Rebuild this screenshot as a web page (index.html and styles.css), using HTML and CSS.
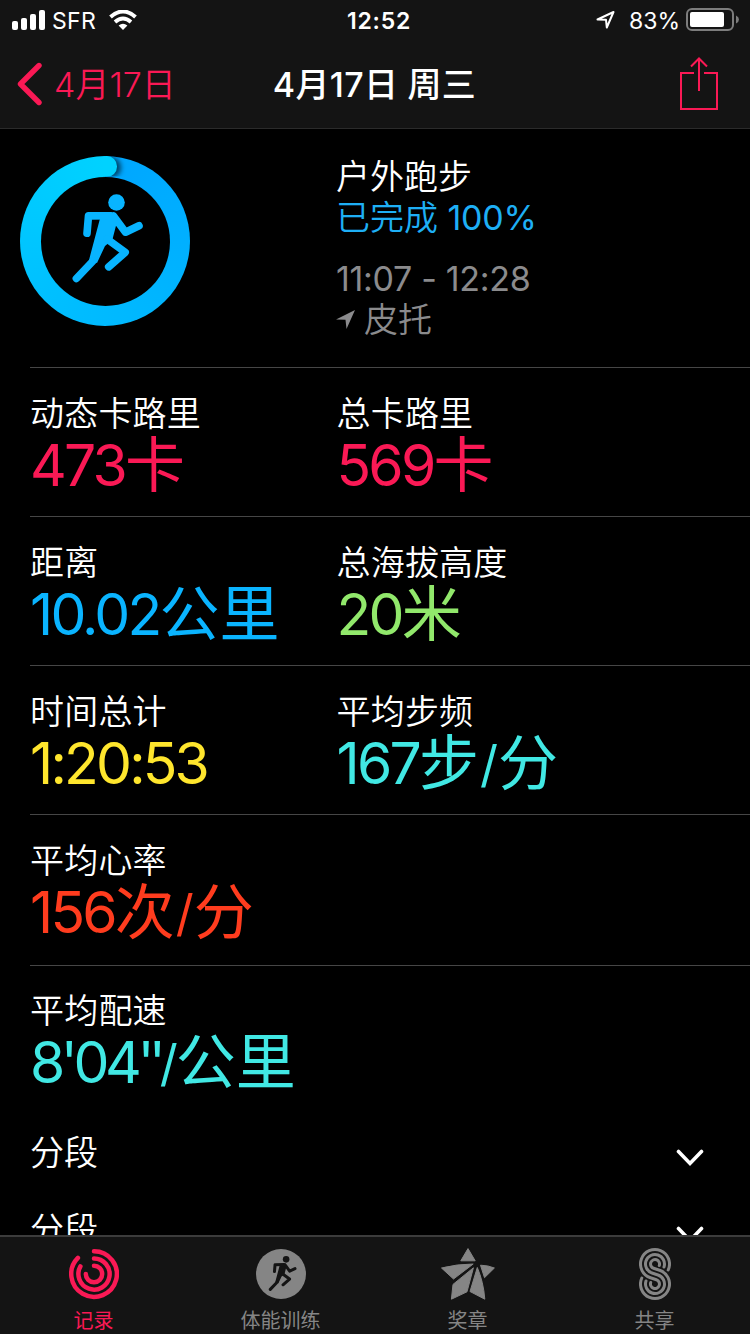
FILE: index.html
```html
<!DOCTYPE html>
<html lang="zh-CN">
<head>
<meta charset="utf-8">
<title>4月17日 周三</title>
<link rel="stylesheet" href="styles.css">
</head>
<body>

<!-- shared runner drawing, used in the ring and in the tab bar -->
<svg class="defs" aria-hidden="true">
  <symbol id="runner" viewBox="0 0 170 170" overflow="visible">
    <circle cx="96.5" cy="46.5" r="8.3" fill="currentColor"/>
    <path d="M80 62.5 L91 57 L98 62 L92.3 84 L85 90 L77 107 L69 104 Z" fill="currentColor"/>
    <path d="M91 59.7 L68.5 59.9 L67 77.3 M93.5 60 L105.5 76.2 L119 69.8 M87 83 L105.2 96.3 L88.7 110.8 M73 105 L56.4 122.5" fill="none" stroke="currentColor" stroke-width="7.6" stroke-linecap="round" stroke-linejoin="round"/>
  </symbol>
</svg>

<div class="screen">
  <header class="top">
    <div class="status">
      <div class="status-left">
        <svg width="34" height="20" viewBox="0 0 34 20" fill="#fff">
          <rect x="0" y="11" width="6" height="9" rx="2"/>
          <rect x="9" y="8" width="6" height="12" rx="2"/>
          <rect x="18" y="4" width="6" height="16" rx="2"/>
          <rect x="27" y="0" width="6" height="20" rx="2"/>
        </svg>
        <span class="carrier">SFR</span>
        <svg width="28" height="20" viewBox="0 0 28 20">
          <path d="M1.5 7 Q14 -4 26.5 7" fill="none" stroke="#fff" stroke-width="4"/>
          <path d="M6 12 Q14 5 22 12" fill="none" stroke="#fff" stroke-width="3.8"/>
          <path d="M9.6 15.6 Q14 12 18.4 15.6 L14 20 Z" fill="#fff"/>
        </svg>
      </div>
      <div class="clock">12:52</div>
      <div class="status-right">
        <svg width="20" height="20" viewBox="0 0 20 20">
          <path d="M1.5 9.5 L17.5 2 L10.8 17.5 L10 9.8 Z" fill="none" stroke="#fff" stroke-width="2" stroke-linejoin="round"/>
        </svg>
        <span class="percent">83%</span>
        <svg width="54" height="24" viewBox="0 0 54 24">
          <rect x="1" y="1" width="46" height="21" rx="5" fill="none" stroke="#7d7d7d" stroke-width="2"/>
          <rect x="4" y="4" width="34" height="15" rx="2" fill="#fff"/>
          <path d="M50 7.5 Q53 9 53 11.5 Q53 14 50 15.5 Z" fill="#7d7d7d"/>
        </svg>
      </div>
    </div>
    <div class="nav">
      <a class="back">
        <svg width="26" height="44" viewBox="0 0 26 44">
          <path d="M22 3.5 L3.5 22 L22 40.5" fill="none" stroke="currentColor" stroke-width="5.4" stroke-linecap="round" stroke-linejoin="round"/>
        </svg>
        <span>4月17日</span>
      </a>
      <div class="title">4月17日 周三</div>
      <a class="share">
        <svg width="40" height="54" viewBox="0 0 40 54">
          <path d="M15 16 H2 V52 H38 V16 H25 M20 34 V2 M12 9.5 L20 1.5 L28 9.5" fill="none" stroke="currentColor" stroke-width="2"/>
        </svg>
      </a>
    </div>
  </header>

  <main class="content">
    <section class="hero">
      <div class="ring">
        <div class="ring-hole"></div>
        <svg class="ring-icon" width="170" height="170"><use href="#runner"/></svg>
      </div>
      <div class="summary">
        <div class="line">户外跑步</div>
        <div class="line done">已完成 <span class="num">100%</span></div>
        <div class="line time">11:07 - 12:28</div>
        <div class="line place">
          <svg width="20" height="20" viewBox="0 0 20 20"><path d="M0 9.5 L19 0 L10.5 19 L9.5 9.8 Z" fill="currentColor"/></svg>
          <span>皮托</span>
        </div>
      </div>
    </section>

    <section class="row">
      <div class="cell">
        <div class="label">动态卡路里</div>
        <div class="value pink"><b>473</b>卡</div>
      </div>
      <div class="cell">
        <div class="label">总卡路里</div>
        <div class="value pink"><b>569</b>卡</div>
      </div>
    </section>

    <section class="row">
      <div class="cell">
        <div class="label">距离</div>
        <div class="value blue"><b>10.02</b>公里</div>
      </div>
      <div class="cell">
        <div class="label">总海拔高度</div>
        <div class="value green"><b>20</b>米</div>
      </div>
    </section>

    <section class="row">
      <div class="cell">
        <div class="label">时间总计</div>
        <div class="value yellow"><b>1:20:53</b></div>
      </div>
      <div class="cell">
        <div class="label">平均步频</div>
        <div class="value aqua"><b>167</b>步<i>/</i>分</div>
      </div>
    </section>

    <section class="row heart">
      <div class="cell">
        <div class="label">平均心率</div>
        <div class="value red"><b>156</b>次<i>/</i>分</div>
      </div>
    </section>

    <section class="row pace">
      <div class="cell">
        <div class="label">平均配速</div>
        <div class="value aqua"><b>8'04<span class="sec">''</span></b><i>/</i>公里</div>
      </div>
    </section>

    <section class="fold">
      <span>分段</span>
      <svg width="28" height="18" viewBox="0 0 28 18"><path d="M2.5 2.5 L14 14.5 L25.5 2.5" fill="none" stroke="#fff" stroke-width="3.6" stroke-linecap="round"/></svg>
    </section>
    <section class="fold">
      <span>分段</span>
      <svg width="28" height="18" viewBox="0 0 28 18"><path d="M2.5 2.5 L14 14.5 L25.5 2.5" fill="none" stroke="#fff" stroke-width="3.6" stroke-linecap="round"/></svg>
    </section>
  </main>

  <nav class="tabs">
    <a class="tab active">
      <svg width="50" height="54" viewBox="0 0 50 54">
        <g fill="none" stroke="currentColor" stroke-width="4.5" stroke-linecap="round">
          <path d="M25 4.2 A22.8 22.8 0 1 1 8.9 10.9"/>
          <path d="M25 11.4 A15.6 15.6 0 1 1 11.4 19.4"/>
          <path d="M25 18.8 A8.2 8.2 0 1 1 16.8 27"/>
        </g>
      </svg>
      <span>记录</span>
    </a>
    <a class="tab">
      <svg width="50" height="54" viewBox="0 0 50 54">
        <circle cx="25" cy="27" r="25" fill="currentColor"/>
        <g class="tab-runner" transform="translate(-8 -6) scale(.395)"><use href="#runner" width="170" height="170"/></g>
      </svg>
      <span>体能训练</span>
    </a>
    <a class="tab">
      <svg width="56" height="54" viewBox="0 0 56 54">
        <g fill="currentColor" stroke="currentColor" stroke-width="1" stroke-linejoin="round">
          <path d="M28 1.6 L20.8 13.8 H35.2 Z"/>
          <path d="M1.5 21 Q17 17 33.2 17 L13.5 32 Z"/>
          <path d="M13 37.4 L33.4 20.8 L27 44.8 L11.4 52.2 Z"/>
          <path d="M37.3 20.5 Q43.5 35 44.8 52.2 L30 44.5 Z"/>
          <path d="M40.5 18.2 Q48 18.3 54.4 21 L44.5 30.7 Z"/>
        </g>
      </svg>
      <span>奖章</span>
    </a>
    <a class="tab">
      <svg width="32" height="54" viewBox="0 -1 32 54">
        <g fill="none" stroke="currentColor" stroke-width="3" stroke-linecap="round">
          <path d="M29.2 22 A14.5 14.5 0 1 0 11.48 29.78 L17.4 31.73 A4.5 4.5 0 1 1 11.7 34.5"/>
          <path d="M25 19 A9.5 9.5 0 1 0 13.04 25.03 L18.96 26.98 A9.5 9.5 0 1 1 7 33"/>
          <path d="M20.3 17.5 A4.5 4.5 0 1 0 14.6 20.28 L20.52 22.23 A14.5 14.5 0 1 1 2.8 30"/>
        </g>
      </svg>
      <span>共享</span>
    </a>
  </nav>
</div>

</body>
</html>
```
FILE: styles.css
```css
* {
  box-sizing: border-box;
}

body {
  margin: 0;
  background: #000;
  color: #fff;
  font-family: Inter, "Noto Sans CJK SC", sans-serif;
  font-size: 34px;
}

svg {
  display: block;
  flex: none;
}

.defs {
  display: none;
}

.screen {
  display: flex;
  flex-direction: column;
  height: 1334px;
  overflow: hidden;
}

/* status bar and title */
.top {
  flex: none;
  height: 129px;
  background: #141414;
  border-bottom: 1px solid #2b2b2b;
}

.status {
  display: grid;
  grid-template-columns: 1fr auto 1fr;
  align-items: center;
  height: 40px;
  padding: 0 12px;
  font-size: 23px;
  line-height: 38px;
}

.status-left,
.status-right {
  display: flex;
  align-items: center;
}

.status span,
.clock {
  padding-top: 2px;
}

.status-right {
  justify-content: flex-end;
  margin-right: -2px;
}

.carrier {
  margin: 0 13px 0 6px;
  letter-spacing: 0.3px;
}

.clock {
  padding-left: 8px;
  font-weight: 600;
  letter-spacing: 0.8px;
}

.percent {
  margin: 0 6px 0 13px;
}

.nav {
  display: grid;
  grid-template-columns: 1fr auto 1fr;
  align-items: center;
  height: 88px;
  padding: 0 31px 0 17px;
}

.back {
  display: flex;
  align-items: center;
  gap: 11px;
  color: #fa1955;
}

.back span,
.title {
  padding-bottom: 4px;
}

.back span {
  font-weight: 350;
}

.title {
  padding-left: 13px;
  font-weight: 500;
  letter-spacing: 0.3px;
}

.share {
  justify-self: end;
  color: #fa1955;
}

/* workout summary */
.content {
  flex: 1;
  min-height: 0;
  overflow: hidden;
}

.hero {
  display: flex;
  height: 238px;
  padding: 27px 0 0 20px;
}

.ring {
  display: grid;
  position: relative;
  width: 170px;
  height: 170px;
  margin-right: 146px;
  border-radius: 50%;
  place-items: center;
  background: conic-gradient(#00a6ff, #00b4ff 35%, #00bcff 55%, #00d2ff);
}

.ring-hole {
  grid-area: 1 / 1;
  width: 129px;
  height: 129px;
  border-radius: 50%;
  background: #000;
}

.ring-icon {
  grid-area: 1 / 1;
  color: #08b4ff;
}

/* round end of the ring */
.ring::after {
  content: "";
  position: absolute;
  top: 0;
  left: 76px;
  width: 20.5px;
  height: 20.5px;
  border-radius: 50%;
  background: #00d2ff;
  box-shadow: 4px 1px 5px rgba(0, 0, 0, 0.6);
  clip-path: inset(0 -12px 0 7px);
}

.summary {
  font-weight: 350;
  line-height: 41px;
}

.done {
  color: #1eaff5;
}

.num,
.time {
  font-weight: 400;
  letter-spacing: -0.3px;
}

.time {
  margin-top: 20px;
}

.time,
.place {
  color: #8b8b8d;
}

.place {
  display: flex;
  align-items: center;
  gap: 8px;
}

/* numbers */
.row {
  display: flex;
  height: 149px;
  margin-left: 30px;
  padding-top: 25px;
  border-top: 1px solid #464646;
}

.heart {
  height: 151px;
}

.pace {
  height: 147px;
  padding-top: 24px;
}

.cell {
  width: 306.5px;
  white-space: nowrap;
}

.label {
  font-weight: 350;
  line-height: 42px;
  letter-spacing: 0.2px;
}

.value {
  font-size: 60px;
  line-height: 60px;
}

.value b {
  font-size: 57px;
  font-weight: 400;
  letter-spacing: -2.8px;
  line-height: 1;
  vertical-align: 1px;
}

/* thin slash between units */
.value i {
  margin: 0 0 0 1px;
  font-size: 50px;
  font-style: normal;
  line-height: 1;
  vertical-align: 3px;
}

.pace .value b {
  letter-spacing: -4.4px;
}

.pace .value i {
  margin: 0 -2px 0 0;
}

.pace .sec {
  letter-spacing: -6px;
}

.pink { color: #fa1955; }
.blue { color: #0ab4ff; }
.green { color: #91e86b; }
.yellow { color: #ffe62d; }
.aqua { color: #41e8e4; }
.red { color: #ff3c1e; }

.fold {
  display: flex;
  align-items: center;
  justify-content: space-between;
  height: 77px;
  padding: 0 46px 0 30px;
  font-weight: 350;
}

.fold svg {
  margin-top: 14px;
}

/* tab bar */
.tabs {
  display: flex;
  flex: none;
  height: 99px;
  padding-right: 2px;
  background: #141414;
  border-top: 2px solid #3c3c3c;
}

.tab {
  display: flex;
  flex: 1;
  flex-direction: column;
  align-items: center;
  padding-top: 10px;
  color: #858585;
  font-size: 20px;
  line-height: 40px;
}

.tab.active {
  color: #fa1955;
}

.tab-runner {
  color: #141414;
}
```
